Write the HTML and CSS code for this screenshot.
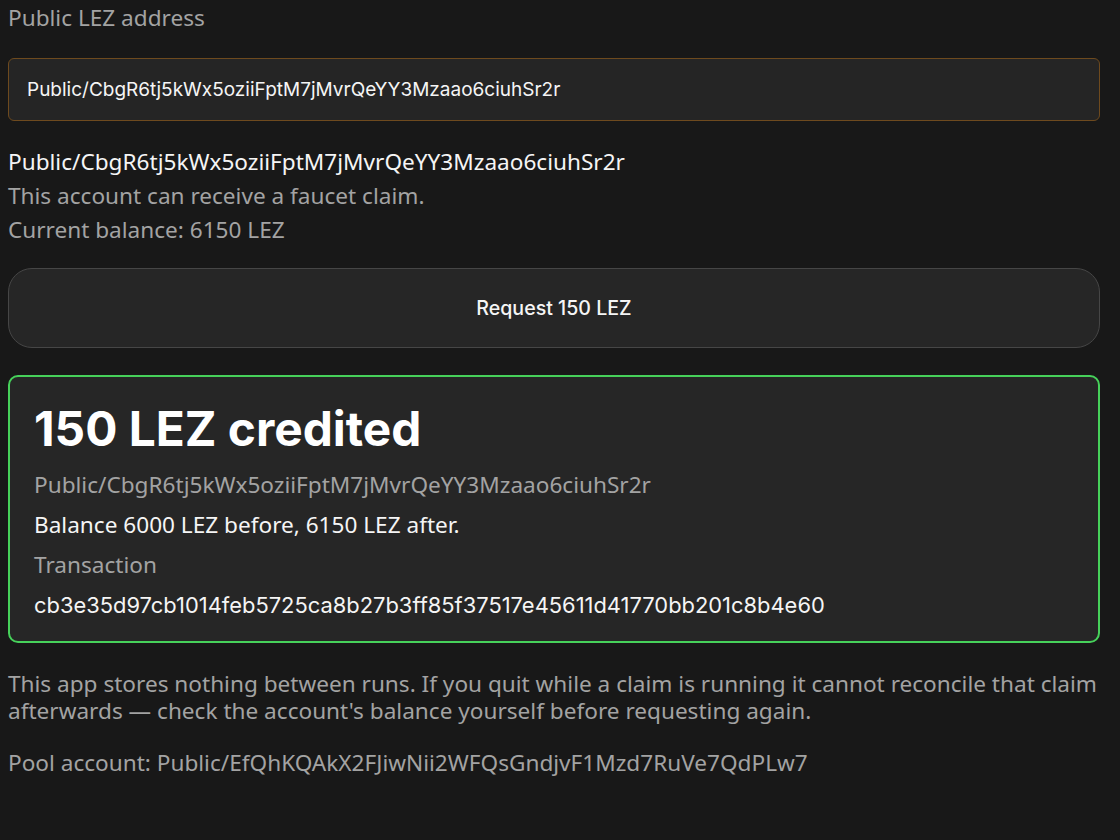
FILE: index.html
```html
<!DOCTYPE html>
<html lang="en">
<head>
<meta charset="utf-8">
<title>LEZ Faucet</title>
<link rel="stylesheet" href="styles.css">
</head>
<body>
<main class="page">
  <label class="label" for="addr">Public LEZ address</label>
  <div class="input-wrap">
    <input id="addr" class="input" type="text" value="Public/CbgR6tj5kWx5oziiFptM7jMvrQeYY3Mzaao6ciuhSr2r">
  </div>

  <section class="account">
    <div class="account-id">Public/CbgR6tj5kWx5oziiFptM7jMvrQeYY3Mzaao6ciuhSr2r</div>
    <div class="muted">This account can receive a faucet claim.</div>
    <div class="muted">Current balance: 6150 LEZ</div>
  </section>

  <button class="request" type="button">Request 150 LEZ</button>

  <section class="result">
    <h1 class="result-title">150 LEZ credited</h1>
    <div class="muted">Public/CbgR6tj5kWx5oziiFptM7jMvrQeYY3Mzaao6ciuhSr2r</div>
    <div class="result-balance">Balance 6000 LEZ before, 6150 LEZ after.</div>
    <div class="muted tx-label">Transaction</div>
    <div class="tx-hash">cb3e35d97cb1014feb5725ca8b27b3ff85f37517e45611d41770bb201c8b4e60</div>
  </section>

  <p class="note">This app stores nothing between runs. If you quit while a claim is running it cannot reconcile that claim afterwards — check the account's balance yourself before requesting again.</p>
  <p class="pool">Pool account: Public/EfQhKQAkX2FJiwNii2WFQsGndjvF1Mzd7RuVe7QdPLw7</p>
</main>
</body>
</html>
```

FILE: styles.css
```css
html, body {
  margin: 0;
  padding: 0;
  background: #181818;
}
body {
  font-family: "Noto Sans", "Liberation Sans", sans-serif;
  color: #f2f2f2;
  font-size: 22.6px;
}
.page {
  width: 1092px;
  padding: 4px 0 0 8px;
  display: flex;
  flex-direction: column;
}
.label {
  color: #a3a3a3;
  line-height: 28px;
}
.input-wrap {
  margin-top: 26px;
}
.input {
  box-sizing: border-box;
  width: 100%;
  height: 63px;
  background: #252525;
  border: 1px solid #6e4a1e;
  border-radius: 6px;
  padding: 0 18px;
  color: #f5f5f5;
  font-family: "Inter", "Noto Sans", sans-serif;
  font-size: 19px;
  outline: none;
}
.account {
  margin-top: 24px;
  display: flex;
  flex-direction: column;
  line-height: 34px;
}
.account-id {
  color: #f5f5f5;
}
.muted {
  color: #a3a3a3;
}
.request {
  margin-top: 21px;
  height: 80px;
  width: 100%;
  background: #262626;
  border: 1px solid #464646;
  border-radius: 24px;
  color: #f5f5f5;
  font-family: "Inter", "Noto Sans", sans-serif;
  font-size: 19.6px;
  font-weight: 500;
}
.result {
  margin-top: 27px;
  box-sizing: border-box;
  height: 268px;
  background: #262626;
  border: 2px solid #46d15a;
  border-radius: 10px;
  padding: 22px 24px 0 24px;
  display: flex;
  flex-direction: column;
  line-height: 40px;
}
.result-title {
  margin: 0 0 6px 0;
  font-family: "Inter", "Noto Sans", sans-serif;
  font-size: 47.8px;
  font-weight: 700;
  line-height: 60px;
  color: #ffffff;
}
.result-balance {
  color: #f5f5f5;
}
.tx-hash {
  font-family: "Inter", "Noto Sans", sans-serif;
  font-size: 21.9px;
  color: #f5f5f5;
}
.note {
  margin: 27px 0 0 0;
  color: #a3a3a3;
  line-height: 27px;
}
.pool {
  margin: 25px 0 0 0;
  color: #a3a3a3;
  line-height: 27px;
}
```
